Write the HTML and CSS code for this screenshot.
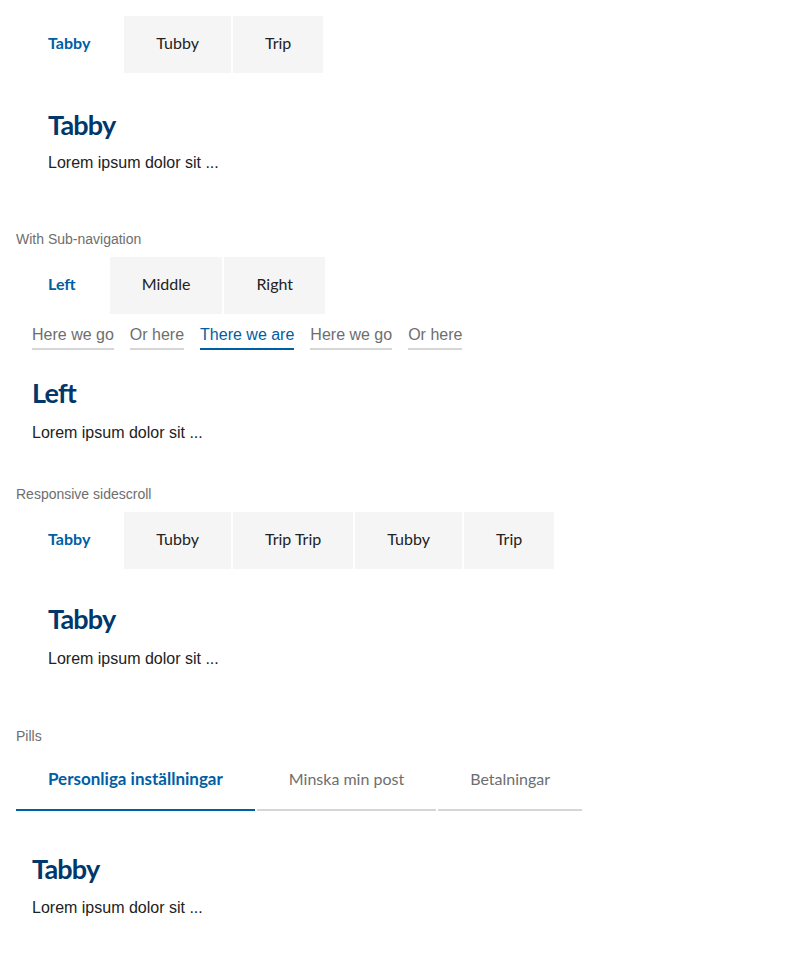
FILE: index.html
```html
<!DOCTYPE html>
<html lang="sv">
<head>
<meta charset="utf-8">
<title>Tabs</title>
<link rel="stylesheet" href="styles.css">
</head>
<body>
  <section class="demo demo-basic">
    <div class="tabs">
      <div class="tab active">Tabby</div>
      <div class="tab">Tubby</div>
      <div class="tab">Trip</div>
    </div>
    <div class="panel panel-wide">
      <h2 class="panel-title">Tabby</h2>
      <p class="panel-text">Lorem ipsum dolor sit ...</p>
    </div>
  </section>

  <section class="demo demo-sub">
    <div class="demo-label">With Sub-navigation</div>
    <div class="tabs">
      <div class="tab active">Left</div>
      <div class="tab">Middle</div>
      <div class="tab">Right</div>
    </div>
    <nav class="subnav">
      <span class="subnav-item">Here we go</span>
      <span class="subnav-item">Or here</span>
      <span class="subnav-item active">There we are</span>
      <span class="subnav-item">Here we go</span>
      <span class="subnav-item">Or here</span>
    </nav>
    <div class="panel panel-narrow panel-sub">
      <h2 class="panel-title">Left</h2>
      <p class="panel-text">Lorem ipsum dolor sit ...</p>
    </div>
  </section>

  <section class="demo demo-scroll">
    <div class="demo-label">Responsive sidescroll</div>
    <div class="tabs">
      <div class="tab active">Tabby</div>
      <div class="tab">Tubby</div>
      <div class="tab">Trip Trip</div>
      <div class="tab">Tubby</div>
      <div class="tab">Trip</div>
    </div>
    <div class="panel panel-wide">
      <h2 class="panel-title">Tabby</h2>
      <p class="panel-text">Lorem ipsum dolor sit ...</p>
    </div>
  </section>

  <section class="demo demo-pills">
    <div class="demo-label">Pills</div>
    <div class="pills">
      <div class="pill active">Personliga inställningar</div>
      <div class="pill">Minska min post</div>
      <div class="pill">Betalningar</div>
    </div>
    <div class="panel panel-narrow panel-pills">
      <h2 class="panel-title">Tabby</h2>
      <p class="panel-text">Lorem ipsum dolor sit ...</p>
    </div>
  </section>
</body>
</html>
```

FILE: styles.css
```css
html, body {
  margin: 0;
  padding: 0;
  background: #fff;
}

body {
  padding: 16px;
  font-family: "Liberation Sans", Arial, sans-serif;
  color: #222;
}

.demo-label {
  font-family: "Liberation Sans", Arial, sans-serif;
  font-size: 14px;
  line-height: 16px;
  color: #6e6e6e;
  margin-bottom: 10px;
}

.tabs {
  display: flex;
  gap: 2px;
}

.tab {
  height: 57px;
  box-sizing: border-box;
  padding: 0 32px 5px;
  display: flex;
  align-items: center;
  background: #f5f5f5;
  font-family: "Lato", "Noto Sans", sans-serif;
  font-size: 16px;
  color: #222;
  white-space: nowrap;
}

.tab.active {
  background: #fff;
  color: #005ea5;
  font-weight: 700;
}

.panel-title {
  margin: 0;
  font-family: "Lato", "Noto Sans", sans-serif;
  font-size: 27px;
  line-height: 34px;
  font-weight: 700;
  color: #00386b;
  letter-spacing: -0.8px;
}

.panel-text {
  margin: 12px 0 0;
  font-family: "Liberation Sans", Arial, sans-serif;
  font-size: 16px;
  line-height: 18px;
  color: #222;
}

.panel-wide {
  padding: 35px 32px 0;
}

.demo-basic {
  padding-bottom: 59px;
}

.subnav {
  display: flex;
  gap: 16px;
  padding: 12px 16px 0;
}

.subnav-item {
  font-family: "Liberation Sans", Arial, sans-serif;
  font-size: 16px;
  line-height: 18px;
  color: #6e6e6e;
  padding-bottom: 4px;
  border-bottom: 2px solid #d6d6d6;
}

.subnav-item.active {
  color: #005ea5;
  border-bottom-color: #005ea5;
}

.panel-narrow {
  padding: 26px 16px 0;
}

.demo-sub {
  padding-bottom: 44px;
}

.panel-sub .panel-text {
  margin-top: 14px;
}

.demo-scroll .panel-wide {
  padding-top: 33px;
}

.demo-scroll .panel-text {
  margin-top: 14px;
}

.demo-scroll {
  padding-bottom: 60px;
}

.pills {
  display: flex;
  gap: 2px;
}

.pill {
  height: 57px;
  box-sizing: border-box;
  padding: 0 32px 6px;
  display: flex;
  align-items: center;
  font-family: "Lato", "Noto Sans", sans-serif;
  font-size: 16px;
  color: #6e6e6e;
  border-bottom: 2px solid #d6d6d6;
  white-space: nowrap;
}

.pill.active {
  font-size: 17px;
  color: #005ea5;
  font-weight: 700;
  border-bottom-color: #005ea5;
}

.panel-pills {
  padding-top: 41px;
}

.panel-pills .panel-text {
  margin-top: 13px;
}
```
